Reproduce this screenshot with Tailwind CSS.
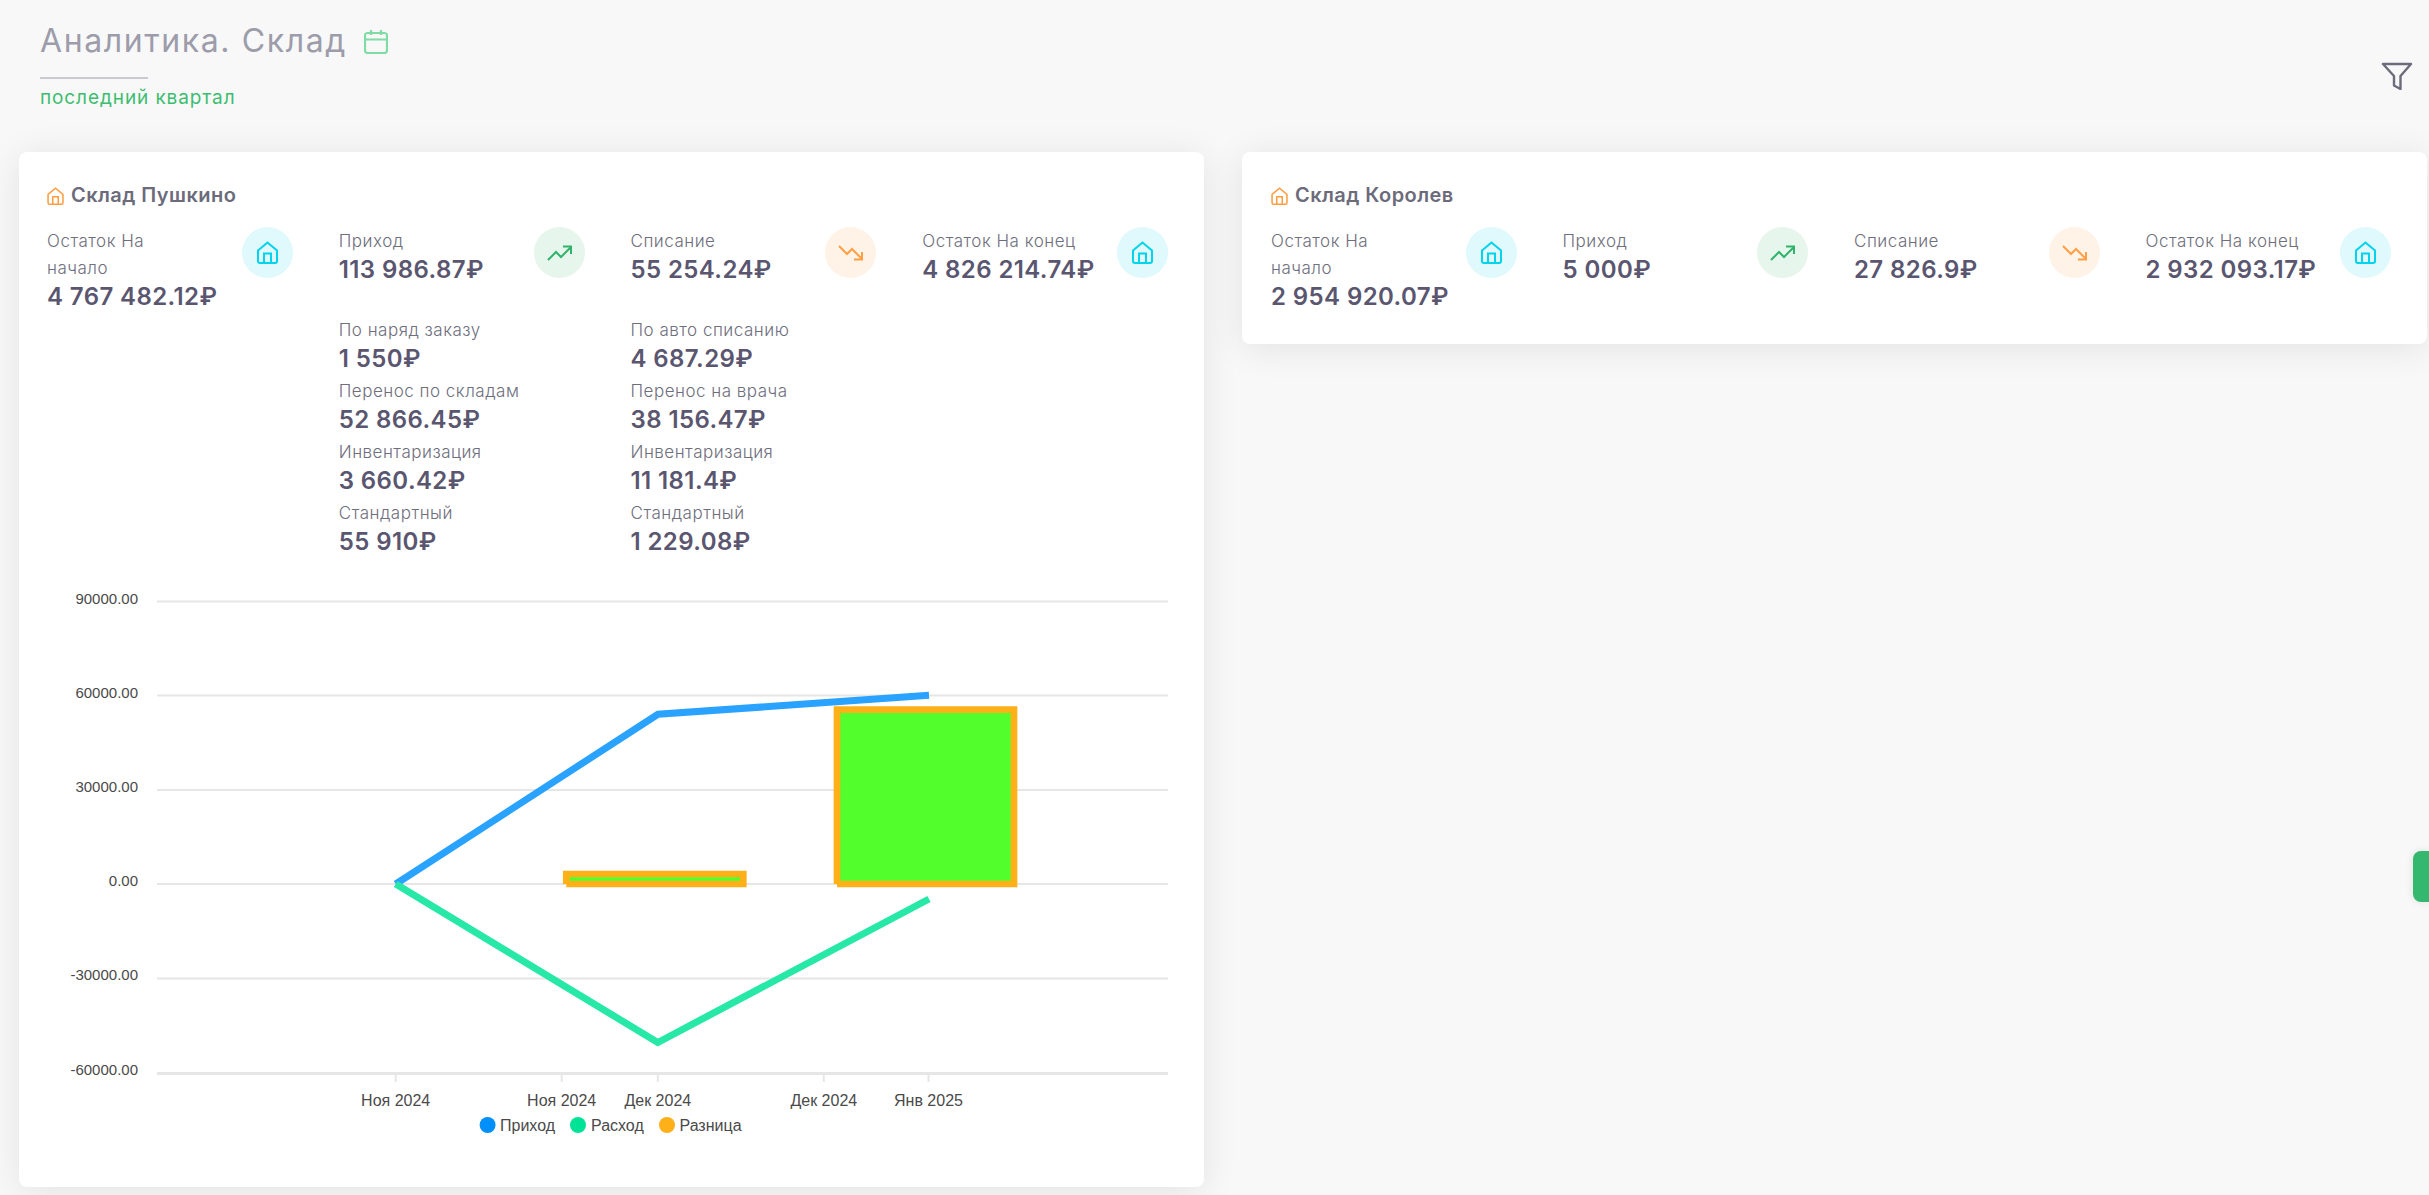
<!DOCTYPE html>
<html lang="ru">
<head>
    <meta charset="UTF-8">
    <meta name="viewport" content="width=device-width, initial-scale=1.0">
    <title>Аналитика. Склад</title>
    <script src="https://cdn.jsdelivr.net/npm/@tailwindcss/browser@4"></script>
</head>
<body class="min-h-screen bg-[#f8f8f8] font-['Inter',sans-serif] overflow-hidden">
    <!-- Header -->
    <div class="h-[152px] pl-[40px] pr-[16px] flex justify-between items-start">
        <div>
            <div class="pt-[22px] flex items-center h-[70px] pb-[10px]">
                <h1 class="text-[32px] leading-[38px] font-normal text-[#9c9cab] tracking-[1.6px]">Аналитика. Склад</h1>
                <svg class="ml-[17px] w-[24px] h-[25px] text-[#7fdca4]" viewBox="0 0 24 25" fill="none" stroke="currentColor" stroke-width="2.2">
                    <rect x="1" y="4" width="22" height="20" rx="2.5"/>
                    <path d="M1 10.5H23M7 1V6M17 1V6"/>
                </svg>
            </div>
            <div class="mt-[7px] w-[108px] h-[2px] bg-[#c9c9cf]"></div>
            <p class="mt-[9px] text-[19px] leading-[20px] text-[#3dbd70] tracking-[0.9px]">последний квартал</p>
        </div>
        <svg class="mt-[62px] w-[32px] h-[28px] text-[#6b6b7b]" viewBox="0 0 32 28" fill="none" stroke="currentColor" stroke-width="2.4" stroke-linejoin="round">
            <path d="M2 2H30L19.5 14V27L13 23.5V14Z"/>
        </svg>
    </div>

    <div class="pl-[19px] pr-[2px] flex items-start gap-[38px]">
        <!-- Склад Пушкино -->
        <div class="w-[1185px] bg-white rounded-[8px] shadow-[0_4px_36px_rgba(0,0,0,0.09)] pl-[28px] pr-[36px] pt-[35px] pb-[37px]">
            <div class="flex items-center h-[17px] mb-[23px]">
                <svg class="w-[17px] h-[18px] text-[#ff9f43]" viewBox="0 0 21 23" fill="none" stroke="currentColor" stroke-width="2">
                    <path d="M1 9.5L10.5 1.5L20 9.5V20A2 2 0 0 1 18 22H3A2 2 0 0 1 1 20Z"/>
                    <path d="M7 22V12.5H14V22"/>
                </svg>
                <h2 class="ml-[7px] -mt-[2px] text-[20px] leading-[20px] font-semibold text-[#6b6b7b] tracking-[0.45px]">Склад Пушкино</h2>
            </div>

            <div class="grid grid-cols-4 gap-x-[46px]">
                <div class="flex justify-between items-start">
                    <div class="pt-[1px]">
                        <div class="text-[17px] leading-[27px] font-light tracking-[0.5px] text-[#6e6e7c]">Остаток На<br>начало</div>
                        <div class="pt-[2px] text-[24px] leading-[25px] tracking-[0.4px] font-semibold text-[#5a5670] whitespace-nowrap">4 767 482.12₽</div>
                    </div>
                    <div class="w-[51px] h-[51px] rounded-full bg-[#e0f9fc] text-[#00d4ec] flex items-center justify-center">
                        <svg class="w-[21px] h-[23px]" viewBox="0 0 21 23" fill="none" stroke="currentColor" stroke-width="2">
                            <path d="M1 9.5L10.5 1.5L20 9.5V20A2 2 0 0 1 18 22H3A2 2 0 0 1 1 20Z"/>
                            <path d="M7 22V12.5H14V22"/>
                        </svg>
                    </div>
                </div>
                <div class="flex justify-between items-start">
                    <div class="pt-[1px]">
                        <div class="text-[17px] leading-[27px] font-light tracking-[0.5px] text-[#6e6e7c]">Приход</div>
                        <div class="pt-[2px] text-[24px] leading-[25px] tracking-[0.4px] font-semibold text-[#5a5670] whitespace-nowrap">113 986.87₽</div>
                    </div>
                    <div class="w-[51px] h-[51px] rounded-full bg-[#e6f6ec] text-[#2fb36a] flex items-center justify-center">
                        <svg class="w-[25px] h-[16px]" viewBox="0 0 25 16" fill="none" stroke="currentColor" stroke-width="2">
                            <path d="M1 15L9 7L14 12L24 2"/>
                            <path d="M16 1.5H24V9"/>
                        </svg>
                    </div>
                </div>
                <div class="flex justify-between items-start">
                    <div class="pt-[1px]">
                        <div class="text-[17px] leading-[27px] font-light tracking-[0.5px] text-[#6e6e7c]">Списание</div>
                        <div class="pt-[2px] text-[24px] leading-[25px] tracking-[0.4px] font-semibold text-[#5a5670] whitespace-nowrap">55 254.24₽</div>
                    </div>
                    <div class="w-[51px] h-[51px] rounded-full bg-[#fff2e7] text-[#ff9f43] flex items-center justify-center">
                        <svg class="w-[25px] h-[16px]" viewBox="0 0 25 16" fill="none" stroke="currentColor" stroke-width="2">
                            <path d="M1 1L9 9L14 4L24 14"/>
                            <path d="M16 14.5H24V7"/>
                        </svg>
                    </div>
                </div>
                <div class="flex justify-between items-start">
                    <div class="pt-[1px]">
                        <div class="text-[17px] leading-[27px] font-light tracking-[0.5px] text-[#6e6e7c] whitespace-nowrap">Остаток На конец</div>
                        <div class="pt-[2px] text-[24px] leading-[25px] tracking-[0.4px] font-semibold text-[#5a5670] whitespace-nowrap">4 826 214.74₽</div>
                    </div>
                    <div class="w-[51px] h-[51px] rounded-full bg-[#e0f9fc] text-[#00d4ec] flex items-center justify-center">
                        <svg class="w-[21px] h-[23px]" viewBox="0 0 21 23" fill="none" stroke="currentColor" stroke-width="2">
                            <path d="M1 9.5L10.5 1.5L20 9.5V20A2 2 0 0 1 18 22H3A2 2 0 0 1 1 20Z"/>
                            <path d="M7 22V12.5H14V22"/>
                        </svg>
                    </div>
                </div>
            </div>

            <!-- Breakdown rows -->
            <div class="grid grid-cols-4 gap-x-[46px] mt-[8px]">
                <div></div>
                <div class="flex flex-col gap-[7px]">
                    <div>
                        <div class="text-[17px] leading-[27px] font-light tracking-[0.5px] text-[#6e6e7c]">По наряд заказу</div>
                        <div class="pt-[2px] text-[24px] leading-[25px] tracking-[0.4px] font-semibold text-[#5a5670]">1 550₽</div>
                    </div>
                    <div>
                        <div class="text-[17px] leading-[27px] font-light tracking-[0.5px] text-[#6e6e7c]">Перенос по складам</div>
                        <div class="pt-[2px] text-[24px] leading-[25px] tracking-[0.4px] font-semibold text-[#5a5670]">52 866.45₽</div>
                    </div>
                    <div>
                        <div class="text-[17px] leading-[27px] font-light tracking-[0.5px] text-[#6e6e7c]">Инвентаризация</div>
                        <div class="pt-[2px] text-[24px] leading-[25px] tracking-[0.4px] font-semibold text-[#5a5670]">3 660.42₽</div>
                    </div>
                    <div>
                        <div class="text-[17px] leading-[27px] font-light tracking-[0.5px] text-[#6e6e7c]">Стандартный</div>
                        <div class="pt-[2px] text-[24px] leading-[25px] tracking-[0.4px] font-semibold text-[#5a5670]">55 910₽</div>
                    </div>
                </div>
                <div class="flex flex-col gap-[7px]">
                    <div>
                        <div class="text-[17px] leading-[27px] font-light tracking-[0.5px] text-[#6e6e7c]">По авто списанию</div>
                        <div class="pt-[2px] text-[24px] leading-[25px] tracking-[0.4px] font-semibold text-[#5a5670]">4 687.29₽</div>
                    </div>
                    <div>
                        <div class="text-[17px] leading-[27px] font-light tracking-[0.5px] text-[#6e6e7c]">Перенос на врача</div>
                        <div class="pt-[2px] text-[24px] leading-[25px] tracking-[0.4px] font-semibold text-[#5a5670]">38 156.47₽</div>
                    </div>
                    <div>
                        <div class="text-[17px] leading-[27px] font-light tracking-[0.5px] text-[#6e6e7c]">Инвентаризация</div>
                        <div class="pt-[2px] text-[24px] leading-[25px] tracking-[0.4px] font-semibold text-[#5a5670]">11 181.4₽</div>
                    </div>
                    <div>
                        <div class="text-[17px] leading-[27px] font-light tracking-[0.5px] text-[#6e6e7c]">Стандартный</div>
                        <div class="pt-[2px] text-[24px] leading-[25px] tracking-[0.4px] font-semibold text-[#5a5670]">1 229.08₽</div>
                    </div>
                </div>
            </div>

            <!-- Chart: the viewBox uses page coordinates -->
            <svg class="block mt-[36px] w-[1121px] h-[560px] font-['Liberation_Sans',sans-serif]" viewBox="47 590 1121 560">
                <g stroke="#e6e6e6" stroke-width="2">
                    <path d="M157 601.5H1168M157 695.5H1168M157 790H1168M157 884H1168M157 978.5H1168"/>
                    <path d="M157 1073.5H1168" stroke-width="3"/>
                    <path d="M395.7 1075V1082M561.7 1075V1082M657.8 1075V1082M823.8 1075V1082M928.5 1075V1082"/>
                </g>
                <g font-size="15" fill="#4a4a4a" text-anchor="end">
                    <text x="138" y="604">90000.00</text>
                    <text x="138" y="698">60000.00</text>
                    <text x="138" y="792">30000.00</text>
                    <text x="138" y="886">0.00</text>
                    <text x="138" y="980">-30000.00</text>
                    <text x="138" y="1075">-60000.00</text>
                </g>
                <g font-size="16" fill="#4a4a4a" text-anchor="middle">
                    <text x="395.7" y="1106">Ноя 2024</text>
                    <text x="561.7" y="1106">Ноя 2024</text>
                    <text x="657.8" y="1106">Дек 2024</text>
                    <text x="823.8" y="1106">Дек 2024</text>
                    <text x="928.5" y="1106">Янв 2025</text>
                </g>
                <!-- Lines -->
                <g fill="none" stroke-width="7" stroke-linejoin="miter">
                    <path d="M395.7 884L658 714.3L929 695.3" stroke="#2aa2ff"/>
                    <path d="M395.7 884L657.8 1042.5L929 899" stroke="#28e8a8"/>
                </g>
                <!-- Bars: open paths, so the bottom left corner stays notched -->
                <g fill="#4cff26" fill-opacity="0.97" stroke="#feb019" stroke-width="6.67">
                    <path d="M566.3 884V874H743.3V884H566.3"/>
                    <path d="M837 884V709.7H1014V884H837"/>
                </g>
                <!-- Legend -->
                <circle cx="487.6" cy="1125" r="8" fill="#008ffb"/>
                <text x="500" y="1131" font-size="16" fill="#4a4a4a">Приход</text>
                <circle cx="578" cy="1125" r="8" fill="#00e396"/>
                <text x="591" y="1131" font-size="16" fill="#4a4a4a">Расход</text>
                <circle cx="667" cy="1125" r="8" fill="#feb019"/>
                <text x="679.5" y="1131" font-size="16" fill="#4a4a4a">Разница</text>
            </svg>
        </div>

        <!-- Склад Королев -->
        <div class="w-[1185px] bg-white rounded-[8px] shadow-[0_4px_36px_rgba(0,0,0,0.09)] pl-[29px] pr-[36px] pt-[35px] pb-[35px]">
            <div class="flex items-center h-[17px] mb-[23px]">
                <svg class="w-[17px] h-[18px] text-[#ff9f43]" viewBox="0 0 21 23" fill="none" stroke="currentColor" stroke-width="2">
                    <path d="M1 9.5L10.5 1.5L20 9.5V20A2 2 0 0 1 18 22H3A2 2 0 0 1 1 20Z"/>
                    <path d="M7 22V12.5H14V22"/>
                </svg>
                <h2 class="ml-[7px] -mt-[2px] text-[20px] leading-[20px] font-semibold text-[#6b6b7b] tracking-[0.45px]">Склад Королев</h2>
            </div>

            <div class="grid grid-cols-4 gap-x-[46px]">
                <div class="flex justify-between items-start">
                    <div class="pt-[1px]">
                        <div class="text-[17px] leading-[27px] font-light tracking-[0.5px] text-[#6e6e7c]">Остаток На<br>начало</div>
                        <div class="pt-[2px] text-[24px] leading-[25px] tracking-[0.4px] font-semibold text-[#5a5670] whitespace-nowrap">2 954 920.07₽</div>
                    </div>
                    <div class="w-[51px] h-[51px] rounded-full bg-[#e0f9fc] text-[#00d4ec] flex items-center justify-center">
                        <svg class="w-[21px] h-[23px]" viewBox="0 0 21 23" fill="none" stroke="currentColor" stroke-width="2">
                            <path d="M1 9.5L10.5 1.5L20 9.5V20A2 2 0 0 1 18 22H3A2 2 0 0 1 1 20Z"/>
                            <path d="M7 22V12.5H14V22"/>
                        </svg>
                    </div>
                </div>
                <div class="flex justify-between items-start">
                    <div class="pt-[1px]">
                        <div class="text-[17px] leading-[27px] font-light tracking-[0.5px] text-[#6e6e7c]">Приход</div>
                        <div class="pt-[2px] text-[24px] leading-[25px] tracking-[0.4px] font-semibold text-[#5a5670] whitespace-nowrap">5 000₽</div>
                    </div>
                    <div class="w-[51px] h-[51px] rounded-full bg-[#e6f6ec] text-[#2fb36a] flex items-center justify-center">
                        <svg class="w-[25px] h-[16px]" viewBox="0 0 25 16" fill="none" stroke="currentColor" stroke-width="2">
                            <path d="M1 15L9 7L14 12L24 2"/>
                            <path d="M16 1.5H24V9"/>
                        </svg>
                    </div>
                </div>
                <div class="flex justify-between items-start">
                    <div class="pt-[1px]">
                        <div class="text-[17px] leading-[27px] font-light tracking-[0.5px] text-[#6e6e7c]">Списание</div>
                        <div class="pt-[2px] text-[24px] leading-[25px] tracking-[0.4px] font-semibold text-[#5a5670] whitespace-nowrap">27 826.9₽</div>
                    </div>
                    <div class="w-[51px] h-[51px] rounded-full bg-[#fff2e7] text-[#ff9f43] flex items-center justify-center">
                        <svg class="w-[25px] h-[16px]" viewBox="0 0 25 16" fill="none" stroke="currentColor" stroke-width="2">
                            <path d="M1 1L9 9L14 4L24 14"/>
                            <path d="M16 14.5H24V7"/>
                        </svg>
                    </div>
                </div>
                <div class="flex justify-between items-start">
                    <div class="pt-[1px]">
                        <div class="text-[17px] leading-[27px] font-light tracking-[0.5px] text-[#6e6e7c] whitespace-nowrap">Остаток На конец</div>
                        <div class="pt-[2px] text-[24px] leading-[25px] tracking-[0.4px] font-semibold text-[#5a5670] whitespace-nowrap">2 932 093.17₽</div>
                    </div>
                    <div class="w-[51px] h-[51px] rounded-full bg-[#e0f9fc] text-[#00d4ec] flex items-center justify-center">
                        <svg class="w-[21px] h-[23px]" viewBox="0 0 21 23" fill="none" stroke="currentColor" stroke-width="2">
                            <path d="M1 9.5L10.5 1.5L20 9.5V20A2 2 0 0 1 18 22H3A2 2 0 0 1 1 20Z"/>
                            <path d="M7 22V12.5H14V22"/>
                        </svg>
                    </div>
                </div>
            </div>
        </div>
    </div>

    <!-- Side tab -->
    <div class="fixed right-0 top-[851px] w-[16px] h-[51px] rounded-l-[8px] bg-[#34b76f] shadow-[0_0_8px_rgba(0,0,0,0.1)]"></div>
</body>
</html>
